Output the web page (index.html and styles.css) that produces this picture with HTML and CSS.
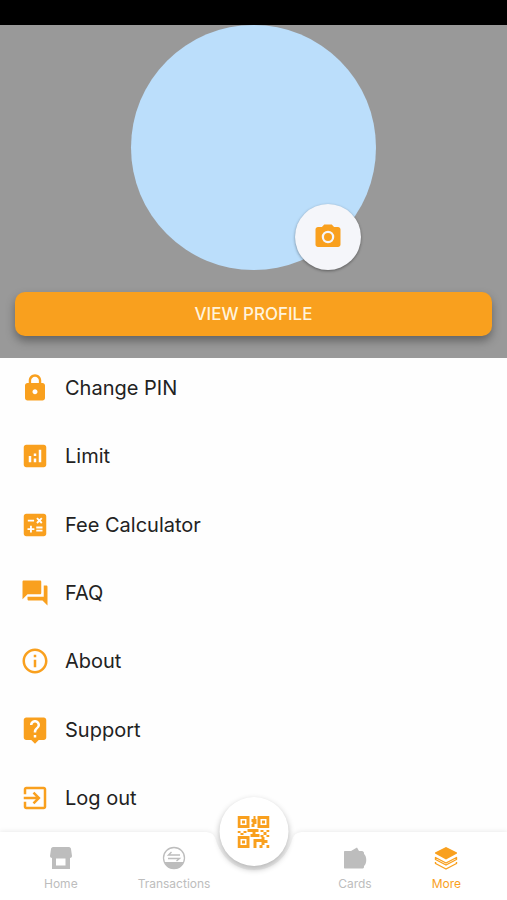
FILE: index.html
```
<!DOCTYPE html>
<html lang="en">
<head>
<meta charset="utf-8">
<meta name="viewport" content="width=device-width, initial-scale=1">
<title>More</title>
<link rel="stylesheet" href="styles.css">
</head>
<body>
<div class="status-bar"></div>

<header class="profile">
  <div class="avatar">
    <button class="camera" type="button" aria-label="Change photo">
      <svg viewBox="0 0 24 24"><path d="M9 2 7.170 4H4c-1.100 0-2 .9-2 2v12c0 1.100.9 2 2 2h16c1.100 0 2-.9 2-2V6c0-1.100-.9-2-2-2h-3.170L15 2zM12 17a5 5 0 1 1 0-10 5 5 0 0 1 0 10z"/><circle cx="12" cy="12" r="3.200"/></svg>
    </button>
  </div>
  <button class="view-profile" type="button">VIEW PROFILE</button>
</header>

<main class="menu">
  <a class="menu-item" href="#">
    <svg viewBox="0 0 24 24"><path d="M18 8h-1V6c0-2.760-2.240-5-5-5S7 3.240 7 6v2H6c-1.100 0-2 .9-2 2v10c0 1.100.9 2 2 2h12c1.100 0 2-.9 2-2V10c0-1.100-.9-2-2-2zm-6 9c-1.100 0-2-.9-2-2s.9-2 2-2 2 .9 2 2-.9 2-2 2zm3.100-9H8.900V6c0-1.710 1.390-3.100 3.100-3.100s3.100 1.390 3.100 3.100v2z"/></svg>
    Change PIN
  </a>
  <a class="menu-item" href="#">
    <svg viewBox="0 0 24 24"><path d="M19 3H5c-1.100 0-2 .9-2 2v14c0 1.100.9 2 2 2h14c1.100 0 2-.9 2-2V5c0-1.100-.9-2-2-2zM9 17H7v-5h2v5zm4 0h-2v-3h2v3zm0-5h-2v-2h2v2zm4 5h-2V7h2v10z"/></svg>
    Limit
  </a>
  <a class="menu-item" href="#">
    <svg viewBox="0 0 24 24"><path d="M19 3H5c-1.100 0-2 .9-2 2v14c0 1.100.9 2 2 2h14c1.100 0 2-.9 2-2V5c0-1.100-.9-2-2-2zm-5.970 4.060 1.060-1.060 1.410 1.410L16.910 6l1.060 1.060-1.410 1.410 1.410 1.410-1.060 1.060-1.410-1.410-1.410 1.410-1.060-1.060 1.410-1.410-1.410-1.410zM6.250 7.720h5v1.500h-5v-1.500zM11.500 16h-2v2H8v-2H6v-1.500h2v-2h1.500v2h2V16zm6.500 1.250h-5v-1.500h5v1.500zm0-2.500h-5v-1.500h5v1.500z"/></svg>
    Fee Calculator
  </a>
  <a class="menu-item" href="#">
    <svg viewBox="0 0 24 24"><path d="M21 6h-2v9H6v2c0 .55.45 1 1 1h11l4 4V7c0-.55-.45-1-1-1zm-4 6V3c0-.55-.45-1-1-1H3c-.55 0-1 .45-1 1v14l4-4h10c.55 0 1-.45 1-1z"/></svg>
    FAQ
  </a>
  <a class="menu-item" href="#">
    <svg viewBox="0 0 24 24"><path d="M11 7h2v2h-2zm0 4h2v6h-2zm1-9C6.480 2 2 6.480 2 12s4.480 10 10 10 10-4.480 10-10S17.520 2 12 2zm0 18c-4.410 0-8-3.590-8-8s3.590-8 8-8 8 3.590 8 8-3.590 8-8 8z"/></svg>
    About
  </a>
  <a class="menu-item" href="#">
    <svg viewBox="0 0 24 24"><path d="M19 2H5c-1.110 0-2 .9-2 2v14c0 1.100.89 2 2 2h4l3 3 3-3h4c1.100 0 2-.9 2-2V4c0-1.100-.9-2-2-2zm-6 16h-2v-2h2v2zm2.070-7.750-.9.920C13.450 11.900 13 12.500 13 14h-2v-.5c0-1.100.45-2.100 1.170-2.830l1.240-1.260c.37-.36.59-.86.59-1.410 0-1.100-.9-2-2-2s-2 .9-2 2H8c0-2.210 1.790-4 4-4s4 1.790 4 4c0 .88-.36 1.680-.93 2.250z"/></svg>
    Support
  </a>
  <a class="menu-item" href="#">
    <svg viewBox="0 0 24 24"><path d="M10.090 15.590 11.500 17l5-5-5-5-1.410 1.410L12.670 11H3v2h9.670l-2.580 2.590zM19 3H5c-1.110 0-2 .9-2 2v4h2V5h14v14H5v-4H3v4c0 1.100.89 2 2 2h14c1.100 0 2-.9 2-2V5c0-1.100-.9-2-2-2z"/></svg>
    Log out
  </a>
</main>

<nav class="tab-bar">
  <div class="tab-shape">
    <span class="edge"></span>
    <svg class="notch" viewBox="0 0 100 68"><path d="M0 0C7 0 10 2 12 8C17 25 31 38 50 38S83 25 88 8C90 2 93 0 100 0V68H0z"/></svg>
    <span class="edge"></span>
  </div>
  <div class="tab-group">
    <a class="tab" href="#">
      <svg viewBox="0 0 24 24"><path d="M4 1h16c1 0 2 1 2 2l1 7c0 1-1 2-2 2v11H3V12c-1 0-2-1-2-2l1-7c0-1 1-2 2-2zM7 12.500v7h9.500v-7z" fill-rule="evenodd"/></svg>
      Home
    </a>
    <a class="tab" href="#">
      <svg viewBox="0 0 24 24"><circle cx="12" cy="12" r="10.500" fill="none" stroke="currentColor" stroke-width="1.300"/><path d="M2.500 16h19c-2 5-5.500 7-9.500 7s-7.500-2-9.500-7z"/><path d="M18 9H6.500l3-3M6 12.500h11.500l-3 2.500" fill="none" stroke="currentColor" stroke-width="1.400"/></svg>
      Transactions
    </a>
  </div>
  <div class="tab-group">
    <a class="tab" href="#">
      <svg viewBox="0 0 24 24"><path d="M2 5h6l6-3.500L16 5h3c1 0 2 1 2 2v1c3 2 3 10 0 12v1c0 1-1 1.500-2 1.500H2c-.6 0-1-.4-1-1V6c0-.6.4-1 1-1z"/></svg>
      Cards
    </a>
    <a class="tab active" href="#">
      <svg viewBox="0 0 24 24"><path d="M12 1 23 6.500v1L12 13.500 1 7.500v-1z"/><path d="M1.500 11.500v2L12 19l10.500-5.500v-2L12 17zM1.500 16v1.500L12 23l10.500-5.500V16" fill="none" stroke="currentColor" stroke-width="1.400" stroke-linejoin="round"/></svg>
      More
    </a>
  </div>
  <button class="scan" type="button" aria-label="Scan QR code">
    <svg viewBox="0 0 32 32"><path d="M0 0h12v12H0zM3 3v6h6V3zM20 0h12v12H20zM23 3v6h6V3zM0 20h12v12H0zM3 23v6h6v-6z" fill-rule="evenodd"/><path d="M4.500 4.500h3v3h-3zM24.500 4.500h3v3h-3zM4.500 24.500h3v3h-3zM16 0h2v3h1v5h-2v3h-3V8h1V6h-1V3h2zM0 15h3v2H0zM3 17h3v2H3zM6 15h3v2H6zM10 13h11v3h-3v2h4v3h-9v-3h2v-2h-5zM23 14h3v2h-3zM29 14h3v2h-3zM26 16h3v3h-3zM23 19h3v2h-3zM29 19h3v2h-3zM16 23h8v-2h3v3h3v3h-3v2h-3v-3h-5v6h-3zM22 29h3v3h-3zM29 29h3v3h-3z"/></svg>
  </button>
</nav>
</body>
</html>
```
FILE: styles.css
```
* { box-sizing: border-box; }

body {
  display: flex;
  flex-direction: column;
  min-height: 100vh;
  margin: 0;
  background: #fefefe;
  color: #222;
  font-family: Inter, "Liberation Sans", sans-serif;
}

a { color: inherit; text-decoration: none; }

button {
  border: 0;
  font-family: inherit;
  cursor: pointer;
}

svg {
  display: block;
  fill: currentColor;
}

.status-bar {
  height: 25px;
  background: #000;
}

/* profile */
.profile {
  display: flex;
  flex-direction: column;
  align-items: center;
  gap: 22px;
  padding: 0 15px 22px;
  background: #999;
}

.avatar {
  position: relative;
  width: 245px;
  height: 245px;
  border-radius: 50%;
  background: #bbdefb;
}

.camera {
  position: absolute;
  right: 15px;
  bottom: 0;
  display: grid;
  place-items: center;
  width: 66px;
  height: 66px;
  padding: 0;
  border-radius: 50%;
  background: #f5f6fa;
  color: #f9a01e;
  box-shadow: 0 1px 3px rgba(0, 0, 0, 0.4);
}

.camera svg { width: 30px; height: 30px; }

.view-profile {
  width: 100%;
  height: 44px;
  border-radius: 10px;
  background: #f9a01e;
  color: #fff3dc;
  font-size: 17px;
  font-weight: 500;
  box-shadow: 0 5px 10px rgba(0, 0, 0, 0.35);
}

/* menu */
.menu {
  display: flex;
  flex: 1;
  flex-direction: column;
  justify-content: space-between;
  padding-bottom: 4px;
}

.menu-item {
  display: flex;
  align-items: center;
  gap: 15px;
  height: 60px;
  padding: 0 20px;
  font-size: 20px;
  font-weight: 400;
}

.menu-item svg {
  width: 30px;
  height: 30px;
  color: #f9a01e;
}

/* bottom tabs */
.tab-bar {
  position: relative;
  display: flex;
  justify-content: space-between;
  height: 68px;
  padding: 14px 46px 0 44px;
}

.tab-shape {
  position: absolute;
  inset: 0;
  display: flex;
  color: #fff;
  filter: drop-shadow(0 -1px 2px rgba(0, 0, 0, 0.07));
}

.edge { flex: 1; background: #fff; }

.notch { width: 100px; height: 68px; }

.tab-group {
  position: relative;
  display: flex;
  gap: 60px;
}

.tab {
  display: flex;
  flex-direction: column;
  align-items: center;
  gap: 6px;
  color: #bdbdbd;
  font-size: 12px;
  line-height: 16px;
}

.tab svg { width: 24px; height: 24px; }

.tab.active { color: #f9a01e; }

.scan {
  position: absolute;
  top: -35px;
  left: 50%;
  display: grid;
  place-items: center;
  width: 69px;
  height: 69px;
  padding: 0;
  border-radius: 50%;
  background: #fff;
  color: #f9a01e;
  box-shadow: 0 3px 6px rgba(0, 0, 0, 0.3);
  transform: translateX(-50%);
}

.scan svg { width: 32px; height: 32px; }
```
